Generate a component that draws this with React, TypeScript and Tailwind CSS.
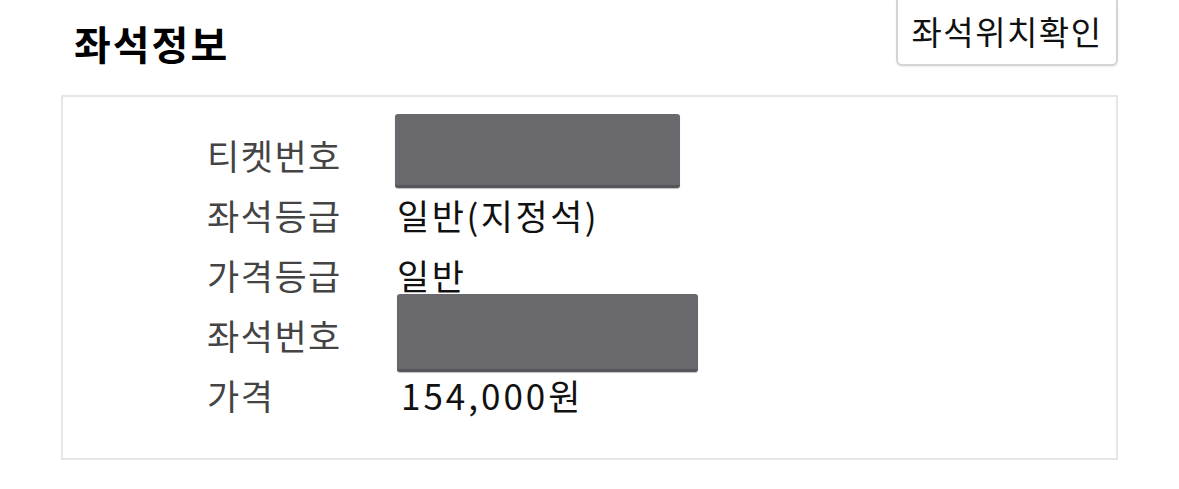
const rows: { label: string; value?: string; mask?: string; wide?: boolean }[] = [
  { label: '티켓번호', mask: 'w-[285px] h-[74px] left-[-2px]' },
  { label: '좌석등급', value: '일반(지정석)' },
  { label: '가격등급', value: '일반' },
  { label: '좌석번호', mask: 'w-[301px] h-[78px]' },
  { label: '가격', value: '154,000원', wide: true },
];

export default function App() {
  return (
    <main
      className="w-[1179px] h-[489px] bg-white px-[61px] overflow-hidden"
      style={{ fontFamily: '"Noto Sans CJK KR", "Noto Sans", sans-serif' }}
    >
      <div className="flex justify-between items-start h-[66px]">
        <h2 className="ml-[13px] mt-[16px] text-[40px] leading-[54px] font-bold text-black tracking-[2px]">
          좌석정보
        </h2>
        <button className="w-[222px] h-[66px] border-2 border-t-0 border-[#d4d4d4] rounded-b-[6px] bg-white text-[33px] leading-none text-[#111] tracking-[1.5px] pb-[2px] shadow-[0_1px_2px_rgba(0,0,0,0.08)]">
          좌석위치확인
        </button>
      </div>
      <section className="mt-[29px] h-[365px] border-2 border-[#e6e6e6] pt-[28px] pl-[144px]">
        {rows.map((r) => (
          <div key={r.label} className="flex h-[60px] items-center text-[35px] tracking-[1.5px]">
            <span className="w-[190px] text-[#444]">{r.label}</span>
            <span className={`relative text-[#111] ${r.wide ? 'tracking-[3px] ml-[4px]' : 'tracking-[2.5px]'}`}>
              {r.value}
              {r.mask && (
                <span
                  className={`absolute top-[-41px] ${r.mask} block rounded-[3px] bg-[#69696d] border-b-[3px] border-[#55555b] shadow-[0_1px_1px_rgba(0,0,0,0.25)]`}
                />
              )}
            </span>
          </div>
        ))}
      </section>
    </main>
  );
}
